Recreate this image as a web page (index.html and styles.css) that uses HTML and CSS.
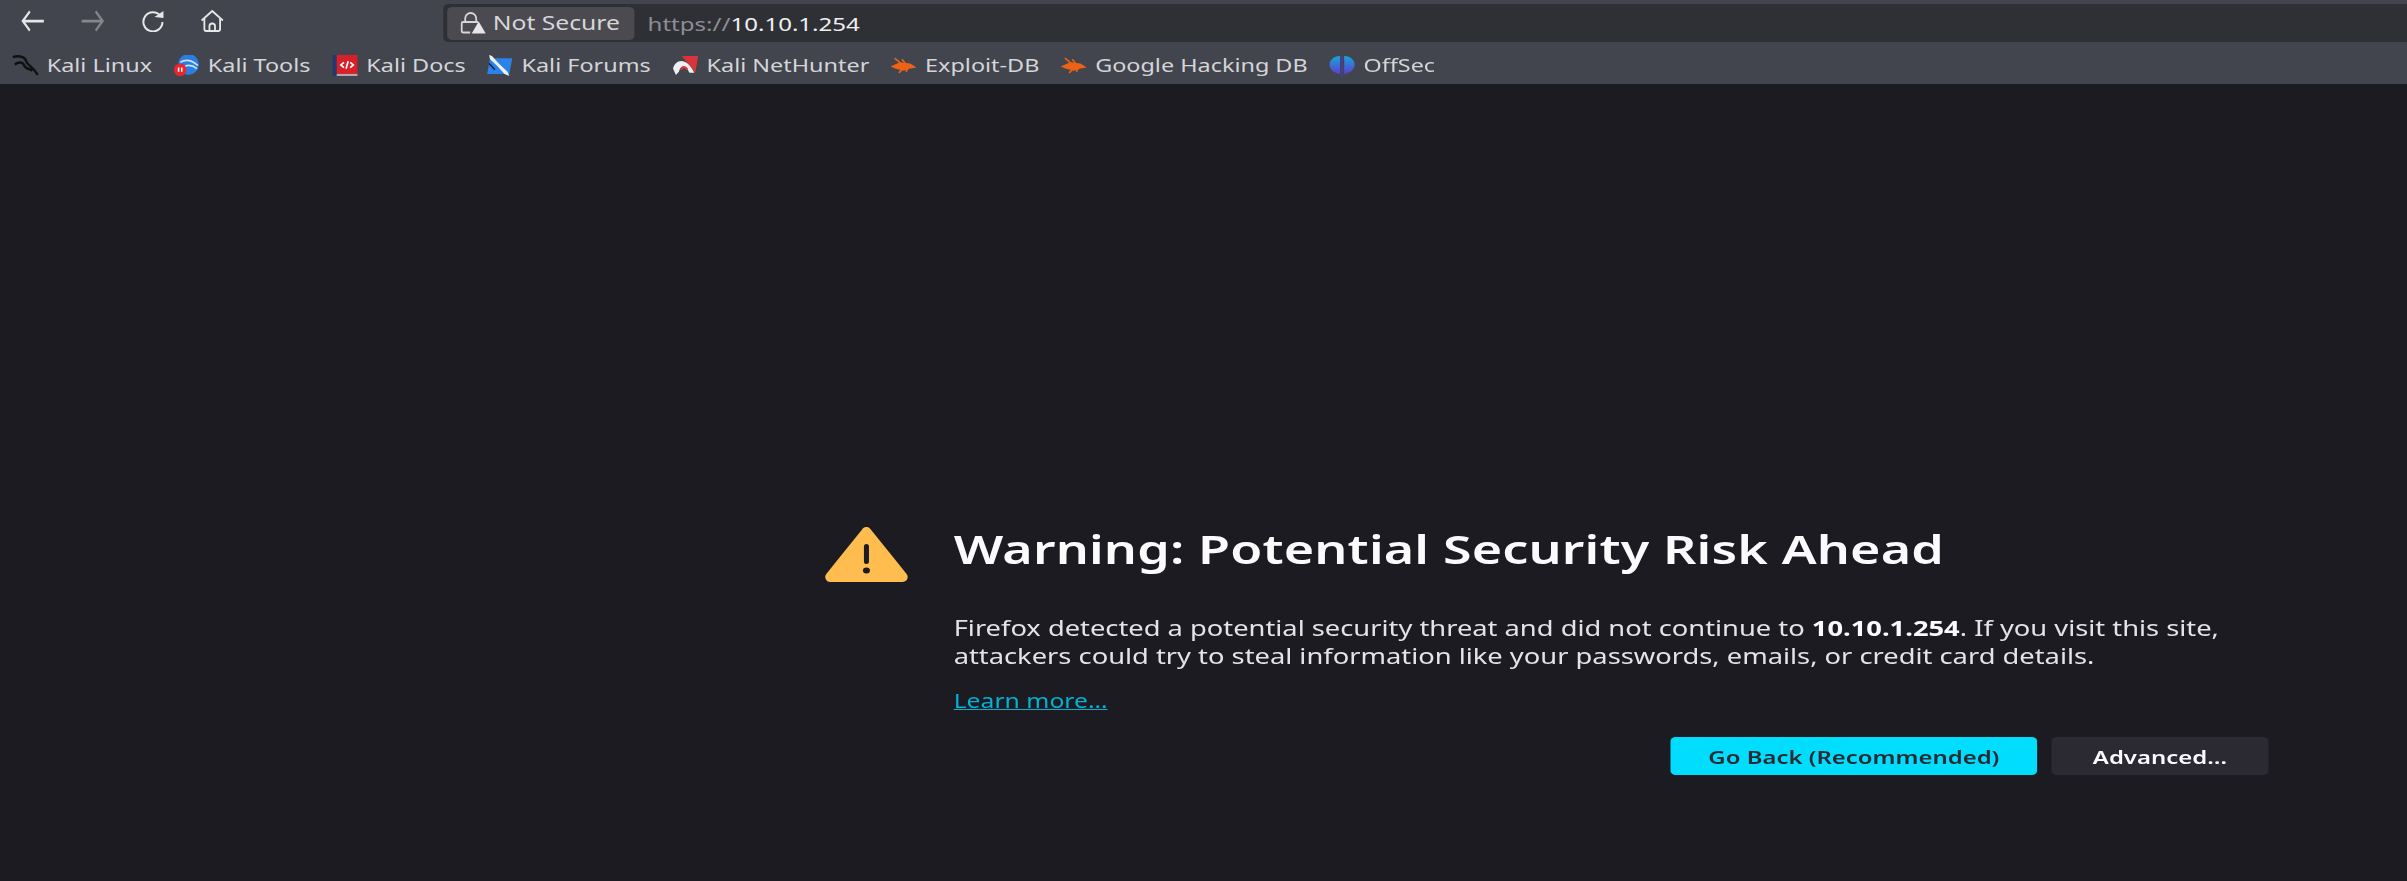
FILE: index.html
```html
<!DOCTYPE html>
<html lang="en">
<head>
    <meta charset="UTF-8">
    <title>Warning: Potential Security Risk Ahead</title>
    <link rel="stylesheet" href="styles.css">
</head>
<body>
<div class="window">
    <div class="toolbar">
        <div class="nav">
            <svg class="nav-icon" viewBox="0 0 24 16" preserveAspectRatio="none"><path d="M23 8H2M9 1L2 8l7 7"/></svg>
            <svg class="nav-icon dim" viewBox="0 0 24 16" preserveAspectRatio="none"><path d="M1 8h21M15 1l7 7-7 7"/></svg>
            <svg class="nav-icon" viewBox="0 0 24 22" preserveAspectRatio="none"><path d="M20 6A9.500 9.500 0 1 0 22 12"/><path class="solid" d="M14 7l9-6v7z"/></svg>
            <svg class="nav-icon" viewBox="0 0 26 22" preserveAspectRatio="none"><path d="M1.500 10.500L13 1l11.500 9.500M4.500 8.500V19q0 2 2 2h13q2 0 2-2V8.500M10 21v-5q0-2.500 3-2.500t3 2.500v5"/></svg>
        </div>
        <div class="urlbar">
            <div class="identity">
                <svg class="lock" viewBox="0 0 26 22" preserveAspectRatio="none">
                    <path d="M5 10V6.500a5.500 5.500 0 0 1 11 0V10M10 20.500H3q-1.500 0-1.500-1.500v-7.500Q1.500 10 3 10h15"/>
                    <path class="solid" d="M18.500 9.500L25.500 21.500h-14z"/>
                </svg>
                <span>Not Secure</span>
            </div>
            <div class="url"><span class="url-scheme">https://</span>10.10.1.254</div>
        </div>
    </div>
    <div class="bookmarks">
        <a class="bookmark">
            <svg class="favicon" viewBox="0 0 26 20" preserveAspectRatio="none"><path class="dragon" d="M1 2C8 0 13 2 14 6c1 4 6 4 11 13M3 9c4-3 8-2 9 1 1 3 5 3 8 5"/></svg>
            Kali Linux
        </a>
        <a class="bookmark">
            <svg class="favicon" viewBox="0 0 26 20" preserveAspectRatio="none"><circle cx="15" cy="9" r="10" fill="#2a7de1"/><path d="M7 7q8-5 17 3M11 11q6-3 12 2" fill="none" stroke="#cfe3f7" stroke-width="1.500"/><circle cx="7" cy="14" r="6" fill="#e8272c"/><path d="M5.500 12v4M8.500 12v4" stroke="#fff" stroke-width="1.500"/></svg>
            Kali Tools
        </a>
        <a class="bookmark">
            <svg class="favicon" viewBox="0 0 26 20" preserveAspectRatio="none"><rect x="1" y="0" width="5" height="20" fill="#24386c"/><rect x="5" y="0" width="20" height="18" fill="#d8202a"/><rect x="5" y="18" width="20" height="2" fill="#b9a5a8"/><path d="M12 7l-3 2.500 3 2.500M18 7l3 2.500-3 2.500M16 6l-2 7" fill="none" stroke="#fff" stroke-width="1.600"/></svg>
            Kali Docs
        </a>
        <a class="bookmark">
            <svg class="favicon" viewBox="0 0 28 20" preserveAspectRatio="none"><path d="M4 3h23l-3 15H1z" fill="#2b83ea"/><path d="M3 0l3 1 7 7 9 8 2 4-5-2-8-8-7-6z" fill="#eef2f5"/><path d="M3 8l6 6" stroke="#14233c" stroke-width="1.500"/></svg>
            Kali Forums
        </a>
        <a class="bookmark">
            <svg class="favicon" viewBox="0 0 28 20" preserveAspectRatio="none"><path d="M10 1h17l-3 16z" fill="#d9343a"/><path d="M1 13C3 4 15 1 23 17h-5C14 9 9 9 7 16l-3 3z" fill="#eef0f1"/><path d="M9 14q3-5 7 0" fill="none" stroke="#d9343a" stroke-width="2"/></svg>
            Kali NetHunter
        </a>
        <a class="bookmark">
            <svg class="favicon" viewBox="0 0 26 20" preserveAspectRatio="none"><path d="M0 11l9-4 10 1 6 4-7 1-5 2-8-2z" fill="#ec6316"/><path d="M4 3l6 5M11 4l4 5M8 17l4-4M15 16l2-4" stroke="#ec6316" stroke-width="1.500"/></svg>
            Exploit-DB
        </a>
        <a class="bookmark">
            <svg class="favicon" viewBox="0 0 26 20" preserveAspectRatio="none"><path d="M0 11l9-4 10 1 6 4-7 1-5 2-8-2z" fill="#ec6316"/><path d="M4 3l6 5M11 4l4 5M8 17l4-4M15 16l2-4" stroke="#ec6316" stroke-width="1.500"/></svg>
            Google Hacking DB
        </a>
        <a class="bookmark">
            <svg class="favicon" viewBox="0 0 26 20" preserveAspectRatio="none">
                <defs><linearGradient id="offsec" x1="0" y1="0" x2="0" y2="1"><stop offset="0" stop-color="#16a6d8"/><stop offset="1" stop-color="#5b3fd0"/></linearGradient></defs>
                <path d="M11 1v17C4 17 1 13 1 9s4-8 10-8zM15 1v17c7-1 10-5 10-9s-4-8-10-8z" fill="url(#offsec)"/><path d="M13 1v19" stroke="#4a3ab8" stroke-width="1.500"/>
            </svg>
            OffSec
        </a>
    </div>
    <main class="page">
        <div class="error">
            <svg class="error-icon" viewBox="0 0 84 56" preserveAspectRatio="none">
                <path d="M42 5L6 50h72z" fill="#ffbd4f" stroke="#ffbd4f" stroke-width="10" stroke-linejoin="round"/>
                <rect x="39.500" y="17" width="5" height="20" rx="2.500" fill="#1c1b22"/>
                <ellipse cx="42" cy="43.500" rx="3.500" ry="3" fill="#1c1b22"/>
            </svg>
            <div class="error-body">
                <h1>Warning: Potential Security Risk Ahead</h1>
                <p>Firefox detected a potential security threat and did not continue to <strong>10.10.1.254</strong>. If you visit this site, attackers could try to steal information like your passwords, emails, or credit card details.</p>
                <a class="learn-more" href="#">Learn more…</a>
                <div class="actions">
                    <button class="primary">Go Back (Recommended)</button>
                    <button class="secondary">Advanced…</button>
                </div>
            </div>
        </div>
    </main>
</div>
</body>
</html>
```

FILE: styles.css
```css
html, body {
    height: 100%;
}

body {
    margin: 0;
    overflow: hidden;
    background-color: #1c1b22;
    font-family: "Noto Sans", sans-serif;
}

svg {
    display: block;
}

/* the whole capture is stretched sideways, so widths below are before the stretch */
.window {
    width: 1851.5px;
    height: 881px;
    display: flex;
    flex-direction: column;
    transform: scaleX(1.3);
    transform-origin: 0 0;
}

.toolbar {
    height: 42px;
    background-color: #42454d;
    display: flex;
    box-sizing: border-box;
    padding-top: 4px;
}

.nav {
    width: 341px;
    margin-top: -4px;
    padding-left: 16px;
    box-sizing: border-box;
    display: flex;
    align-items: center;
    gap: 27.6px;
}

.nav-icon {
    width: 18.5px;
    height: 22px;
    fill: none;
    stroke: #e6e6e8;
    stroke-width: 2;
}

.nav-icon.dim {
    stroke: #85878c;
}

.nav-icon .solid, .lock .solid {
    fill: #e6e6e8;
    stroke: none;
}

.urlbar {
    flex: 1;
    background-color: #2f3036;
    border-radius: 4px 0 0 4px;
    display: flex;
    align-items: center;
    padding-left: 2.5px;
}

.identity {
    width: 144.6px;
    height: 33px;
    box-sizing: border-box;
    padding-left: 10.5px;
    background-color: #4a4a50;
    border-radius: 4px;
    display: flex;
    align-items: center;
    gap: 5px;
    color: #d6d6d8;
    font-size: 19px;
}

.lock {
    width: 20px;
    height: 22px;
    fill: none;
    stroke: #d6d6d8;
    stroke-width: 1.800;
}

.url {
    margin-left: 10px;
    font-size: 18.5px;
    color: #f0f0f2;
}

.url-scheme {
    color: #8d8e93;
}

.bookmarks {
    height: 42px;
    background-color: #42454d;
    display: flex;
    align-items: center;
    gap: 16px;
    padding-left: 9px;
    padding-top: 4px;
    box-sizing: border-box;
}

.bookmark {
    display: flex;
    align-items: center;
    gap: 6.1px;
    color: #d4d5d8;
    font-size: 18px;
}

.favicon {
    width: 20.8px;
    height: 21px;
}

.dragon {
    fill: none;
    stroke: #111114;
    stroke-width: 2.400;
}

.page {
    flex: 1;
    padding-top: 440px;
    padding-left: 634px;
}

.error {
    display: flex;
    gap: 34.6px;
}

.error-icon {
    width: 65px;
    height: 56px;
    margin-top: 3px;
}

.error-body {
    width: 1011.4px;
    color: #e4e4e6;
}

h1 {
    margin: 0;
    font-size: 40px;
    line-height: 50px;
    font-weight: 600;
    letter-spacing: 0.12px;
    color: #fbfbfe;
}

p {
    margin: 41px 0 0;
    font-size: 21px;
    line-height: 27.500px;
}

strong {
    color: #fbfbfe;
}

.learn-more {
    display: inline-block;
    margin-top: 18px;
    font-size: 19px;
    color: #00b3d4;
}

.actions {
    display: flex;
    justify-content: flex-end;
    gap: 10.8px;
    margin-top: 23px;
}

button {
    height: 38px;
    border: none;
    border-radius: 4px;
    font-family: inherit;
    font-size: 18.4px;
    font-weight: 600;
}

.primary {
    width: 282.3px;
    background-color: #00ddff;
    color: #2b2a33;
}

.secondary {
    width: 167px;
    background-color: #2b2a33;
    color: #fbfbfe;
}
```
